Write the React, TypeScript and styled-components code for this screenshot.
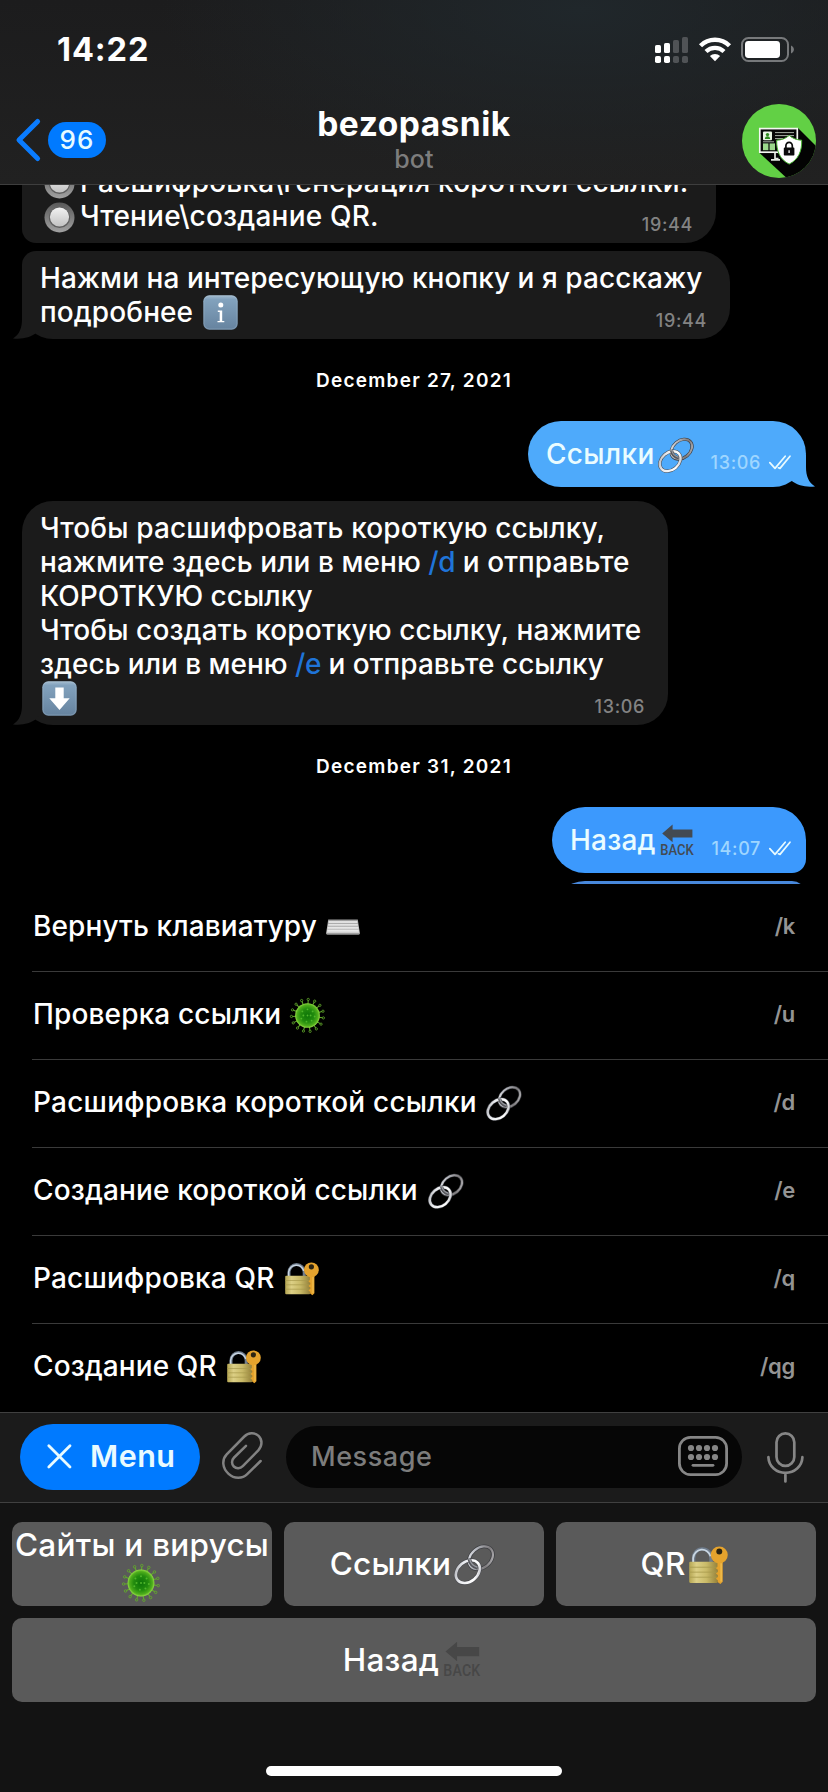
import React from 'react';
import styled, { createGlobalStyle, css } from 'styled-components';

const GlobalStyle = createGlobalStyle`
  body {
    margin: 0;
    background: #000;
    font-family: Inter, "Noto Sans", sans-serif;
    font-weight: 500;
    color: #fff;
  }
`;

/* ---------- layout shells ---------- */

const Screen = styled.div`
  width: 828px;
  height: 1792px;
  display: flex;
  flex-direction: column;
  overflow: hidden;
  background: #000;
`;

const Header = styled.header`
  box-sizing: border-box;
  flex: none;
  height: 185px;
  padding-top: 30px;
  border-bottom: 1px solid #3e3e3e;
  background:
    radial-gradient(ellipse 420px 170px at 580px 10px, #20272b, rgba(30, 32, 33, 0)),
    linear-gradient(#1c1c1d, #212121);
  position: relative;
  z-index: 1;
`;

const StatusBar = styled.div`
  height: 66px;
  display: flex;
  align-items: flex-start;
  justify-content: space-between;
  padding: 0 33px 0 57px;
  box-sizing: border-box;
`;

const Clock = styled.span`
  font-size: 32.5px;
  line-height: 40px;
  font-weight: 720;
  letter-spacing: 0.9px;
`;

const StatusIcons = styled.div`
  display: flex;
  padding-top: 7px;
  gap: 10px;
`;

const NavBar = styled.div`
  height: 88px;
  display: grid;
  grid-template-columns: 200px 1fr 200px;
  align-items: center;
`;

const BackButton = styled.div`
  display: flex;
  align-items: center;
  padding-left: 15px;
  gap: 7px;
`;

const UnreadBadge = styled.span`
  width: 58px;
  height: 36px;
  border-radius: 18px;
  background: #007aff;
  color: #e6fbff;
  font-size: 26px;
  line-height: 36px;
  letter-spacing: 1px;
  text-align: center;
`;

const Heading = styled.div`
  align-self: start;
  padding-top: 10px;
  text-align: center;
`;

const ChatName = styled.div`
  font-size: 33.5px;
  line-height: 36px;
  font-weight: 720;
  letter-spacing: 0.5px;
`;

const ChatKind = styled.div`
  margin-top: 2px;
  font-size: 25px;
  line-height: 30px;
  letter-spacing: 0.2px;
  color: #7d7d7d;
`;

const AvatarSlot = styled.div`
  display: flex;
  justify-content: flex-end;
  padding: 2px 12px 0 0;
`;

const Chat = styled.main`
  flex: none;
  height: 699px;
  overflow: hidden;
`;

const Messages = styled.div`
  display: flex;
  flex-direction: column;
  margin-top: -30px;
`;

const Bubble = styled.div<{ $out?: boolean; $w: number; $h: number; $radius: string; $gap?: number; $bg?: string }>`
  position: relative;
  isolation: isolate;
  box-sizing: border-box;
  flex: none;
  width: ${p => p.$w}px;
  height: ${p => p.$h}px;
  margin-top: ${p => p.$gap ?? 0}px;
  border-radius: ${p => p.$radius};
  background: ${p => p.$bg ?? '#1b1b1b'};
  ${p =>
    p.$out
      ? css`
          align-self: flex-end;
          margin-right: 22px;
          padding: 16px 15px 16px 17px;
          color: #eafcff;
        `
      : css`
          align-self: flex-start;
          margin-left: 22px;
          padding: 10px 23px 10px 18px;
        `}
`;

const Line = styled.div`
  display: flex;
  height: 34px;
  white-space: pre;
`;

const Words = styled.span<{ $track?: number; $link?: boolean; $shift?: number }>`
  font-size: 28px;
  font-weight: 550;
  line-height: 34px;
  letter-spacing: ${p => p.$track ?? 0.1}px;
  margin-left: ${p => p.$shift ?? 0}px;
  color: ${p => (p.$link ? '#1f74d8' : 'inherit')};
`;

const Stamp = styled.span<{ $out?: boolean }>`
  align-self: flex-end;
  margin-left: auto;
  margin-bottom: -3px;
  font-size: 18px;
  line-height: 22px;
  letter-spacing: 0.65px;
  color: ${p => (p.$out ? '#9fd6ff' : '#838383')};
`;

const DayLabel = styled.div`
  flex: none;
  box-sizing: border-box;
  height: 82px;
  padding-top: 1px;
  line-height: 82px;
  text-align: center;
  font-size: 19px;
  font-weight: 630;
  letter-spacing: 1.25px;
`;

const TailBox = styled.svg<{ $out?: boolean }>`
  position: absolute;
  z-index: -1;
  bottom: 0;
  ${p => (p.$out ? 'right: -9px; transform: scaleX(-1);' : 'left: -9px;')}
`;

const IconBox = styled.svg<{ $left?: number; $top?: number }>`
  display: block;
  flex: none;
  overflow: visible;
  margin-left: ${p => p.$left ?? 0}px;
  margin-top: ${p => p.$top ?? 0}px;
`;

const Commands = styled.section`
  flex: none;
  padding-left: 32px;
`;

const Command = styled.div`
  box-sizing: border-box;
  height: 88px;
  display: flex;
  align-items: center;
  padding: 0 33px 3px 1px;
  border-bottom: 1px solid #3a3a3a;
  &:last-child {
    border-bottom-color: transparent;
  }
`;

const Slash = styled.span`
  margin-left: auto;
  font-size: 22px;
  font-weight: 600;
  line-height: 30px;
  letter-spacing: -0.3px;
  color: #949494;
`;

const InputBar = styled.div`
  box-sizing: border-box;
  flex: none;
  height: 91px;
  display: flex;
  align-items: center;
  padding: 0 0 2px 20px;
  border-top: 1px solid #404040;
  border-bottom: 1px solid #404040;
  background: #1b1b1b;
`;

const MenuButton = styled.div`
  box-sizing: border-box;
  width: 180px;
  height: 66px;
  padding: 0 0 2px 27px;
  display: flex;
  align-items: center;
  gap: 18px;
  border-radius: 33px;
  background: #007aff;
  color: #e9fbff;
  font-size: 30.5px;
  font-weight: 630;
  letter-spacing: 0.5px;
`;

const Field = styled.div`
  box-sizing: border-box;
  width: 456px;
  height: 62px;
  margin-left: 24px;
  padding: 0 14px 0 25px;
  display: flex;
  align-items: center;
  justify-content: space-between;
  border-radius: 31px;
  background: #060606;
  color: #7c7c7c;
  font-size: 27px;
  letter-spacing: 0.56px;
`;

const Keyboard = styled.section`
  flex: 1;
  display: flex;
  flex-direction: column;
  padding: 19px 12px 0;
  background: #131313;
`;

const Keys = styled.div`
  display: grid;
  grid-template-columns: repeat(3, 1fr);
  grid-auto-rows: 84px;
  gap: 12px;
`;

const Key = styled.div<{ $wide?: boolean; $stack?: boolean }>`
  grid-column: ${p => (p.$wide ? '1 / -1' : 'auto')};
  display: flex;
  flex-direction: ${p => (p.$stack ? 'column' : 'row')};
  align-items: center;
  justify-content: center;
  padding-right: ${p => (p.$stack ? 0 : 4)}px;
  border-radius: 10px;
  background: #5a5a5a;
  font-size: 31.5px;
  font-weight: 550;
  line-height: 38px;
  letter-spacing: 0.25px;
  white-space: nowrap;
`;

const HomeIndicator = styled.div`
  width: 296px;
  height: 10px;
  margin: auto auto 16px;
  border-radius: 5px;
  background: #fff;
`;

/* ---------- emoji drawings ---------- */

type EmojiProps = { size?: number; left?: number; top?: number };

const DefsBox = styled.svg`
  position: absolute;
`;

const Defs = () => (
  <DefsBox width="0" height="0">
    <defs>
      <linearGradient id="tile" x1="0" y1="0" x2="0" y2="1">
        <stop offset="0" stopColor="#a3bccf" />
        <stop offset="0.12" stopColor="#82a2bd" />
        <stop offset="1" stopColor="#66839f" />
      </linearGradient>
      <linearGradient id="steel" x1="0" y1="0" x2="1" y2="1">
        <stop offset="0" stopColor="#f4f6fa" />
        <stop offset="0.35" stopColor="#a9abb2" />
        <stop offset="0.7" stopColor="#7d7a7c" />
        <stop offset="1" stopColor="#c8c8cc" />
      </linearGradient>
      <linearGradient id="steelBright" x1="0" y1="0" x2="1" y2="1">
        <stop offset="0" stopColor="#a4a6ac" />
        <stop offset="0.3" stopColor="#e8eaee" />
        <stop offset="0.75" stopColor="#ffffff" />
        <stop offset="1" stopColor="#9d9fa8" />
      </linearGradient>
      <radialGradient id="virus">
        <stop offset="0" stopColor="#0c7408" />
        <stop offset="0.55" stopColor="#238c0e" />
        <stop offset="0.85" stopColor="#4fae1c" />
        <stop offset="1" stopColor="#92dc46" />
      </radialGradient>
      <linearGradient id="brass" x1="0" y1="0" x2="1" y2="0">
        <stop offset="0" stopColor="#b5a653" />
        <stop offset="0.25" stopColor="#dccf85" />
        <stop offset="0.6" stopColor="#c9ba68" />
        <stop offset="1" stopColor="#94803a" />
      </linearGradient>
      <linearGradient id="knob" x1="0" y1="0" x2="0" y2="1">
        <stop offset="0" stopColor="#f2f2f2" />
        <stop offset="1" stopColor="#c2c2c2" />
      </linearGradient>
      <linearGradient id="rim" x1="0" y1="0" x2="0" y2="1">
        <stop offset="0" stopColor="#585858" />
        <stop offset="1" stopColor="#a2a2a2" />
      </linearGradient>
      <linearGradient id="keys" x1="0" y1="0" x2="0" y2="1">
        <stop offset="0" stopColor="#9b9b9b" />
        <stop offset="1" stopColor="#d8d8d8" />
      </linearGradient>
    </defs>
  </DefsBox>
);

const RadioEmoji = () => (
  <IconBox width="31" height="31" viewBox="0 0 31 31" $left={4} $top={3}>
    <circle cx="15.5" cy="15.5" r="15" fill="url(#rim)" />
    <circle cx="15.5" cy="15.5" r="10.6" fill="#5f5f5f" />
    <circle cx="15.5" cy="15" r="9.6" fill="url(#knob)" />
  </IconBox>
);

const Tile = ({ left, top, children }: EmojiProps & { children: React.ReactNode }) => (
  <IconBox width="35" height="35" viewBox="0 0 35 35" $left={left} $top={top}>
    <rect x="0.3" y="0.3" width="34.4" height="34.4" rx="6" fill="url(#tile)" />
    <rect x="1" y="1" width="33" height="33" rx="5.4" fill="none" stroke="#b4c8d8" strokeOpacity="0.3" />
    {children}
  </IconBox>
);

const InfoEmoji = (p: EmojiProps) => (
  <Tile {...p}>
    <circle cx="17.8" cy="10" r="2.5" fill="#fff" />
    <path d="M14.8 15.4h4.4v10.5h2.1v1.4h-6.8v-1.4h2.2v-9h-1.9z" fill="#fff" />
  </Tile>
);

const DownEmoji = (p: EmojiProps) => (
  <Tile {...p}>
    <path d="M13.3 6.4h8.4v10.8h6L17.5 28.9 7.3 17.2h6z" fill="#fff" />
  </Tile>
);

const LinkEmoji = ({ size = 34, left, top }: EmojiProps) => (
  <IconBox width={size} height={size} viewBox="0 0 34 34" $left={left} $top={top}>
    <g fill="none">
      <g transform="rotate(-40 22.6 11.2)">
        <ellipse cx="22.6" cy="11.2" rx="11.6" ry="8.6" stroke="#3d3e42" strokeWidth="3.2" />
        <ellipse cx="22.6" cy="11.2" rx="11.6" ry="8.6" stroke="url(#steel)" strokeWidth="1.9" />
      </g>
      <g transform="rotate(-40 11.2 23.2)">
        <ellipse cx="11.2" cy="23.2" rx="11.6" ry="8.6" stroke="#4a4b50" strokeWidth="3.3" />
        <ellipse cx="11.2" cy="23.2" rx="11.6" ry="8.6" stroke="url(#steelBright)" strokeWidth="2.3" />
      </g>
      <path d="M12.6 12.4c.5 3.4 3.2 6.4 7 7.4" stroke="#55565b" strokeWidth="3.2" />
      <path d="M12.8 12.4c.7 3.2 3.2 6 6.8 7" stroke="#96989f" strokeWidth="1.2" />
    </g>
  </IconBox>
);

const spikes = Array.from({ length: 15 }, (_, i) => (i * Math.PI * 2) / 15 + 0.15);
const dots = [
  [17, 17], [12, 13], [17, 11], [22, 13], [24, 18], [21, 22], [16, 23], [11, 20], [13, 17], [20, 17],
];

const VirusEmoji = ({ size = 35, left, top }: EmojiProps) => (
  <IconBox width={size} height={size} viewBox="0 0 34 34" $left={left} $top={top}>
    {spikes.map(a => {
      const c = Math.cos(a);
      const s = Math.sin(a);
      return (
        <g key={a} stroke="#62aa2c" fill="none">
          <path d={`M${17 + 11 * c} ${17 + 11 * s}L${17 + 14.6 * c} ${17 + 14.6 * s}`} strokeWidth="1" />
          <circle cx={17 + 15.6 * c} cy={17 + 15.6 * s} r="1.1" strokeWidth="0.8" />
        </g>
      );
    })}
    <circle cx="17" cy="17" r="12" fill="url(#virus)" />
    {dots.map(([x, y]) => (
      <circle key={`${x}-${y}`} cx={x} cy={y} r="0.9" fill="#4fb62a" />
    ))}
  </IconBox>
);

const LockKeyEmoji = ({ size = 34, left, top }: EmojiProps) => (
  <IconBox width={size} height={size} viewBox="0 0 34 34" $left={left} $top={top}>
    <path d="M4 15V10.5a7.6 8 0 0 1 15.2 0V15" fill="none" stroke="#6f7c8c" strokeWidth="3" />
    <path d="M3.6 15V10.5a7.8 8.2 0 0 1 15.2-1.6" fill="none" stroke="#c9d6e2" strokeWidth="1.5" />
    <rect x="0.2" y="13.8" width="25" height="18.4" rx="1" fill="url(#brass)" />
    <path d="M0.4 18.5h24.4M0.4 22.8h24.4M0.4 27.2h24.4" stroke="#a89a4c" strokeWidth="0.7" />
    <circle cx="26.4" cy="7.8" r="7.4" fill="#e5a32d" />
    <path
      d="M29.4 13V31.2l-2 2-2.3-1.6v-1.8l-1.7-1.3 1.7-1.4v-1.8l-1.7-1.3 1.7-1.4v-1.8l-1.7-1.3 1.4-1.4V13z"
      fill="#e5a32d"
    />
    <path d="M28 15v16" stroke="#f4c65a" strokeWidth="0.9" />
    <circle cx="26.4" cy="4.8" r="2.6" fill="#2b2413" />
  </IconBox>
);

const KeyboardEmoji = ({ left, top }: EmojiProps) => (
  <IconBox width="34" height="16" viewBox="0 0 34 16" $left={left} $top={top}>
    <path d="M2.2 0.4h29.6l2 13.6a1.4 1.4 0 0 1-1.4 1.5H1.6A1.4 1.4 0 0 1 .2 14z" fill="url(#keys)" />
    <path d="M2.6 3h28.8M2.2 5.8h29.6M1.8 8.8h30.4M1.4 11.8h31.2" stroke="#f3f3f3" strokeWidth="1.3" />
    <path d="M0.8 14.8h32.4" stroke="#8b8b8b" strokeWidth="1" />
  </IconBox>
);

const BackEmoji = ({ size = 34, left, top, tint = '#434a52' }: EmojiProps & { tint?: string }) => (
  <IconBox width={size} height={size} viewBox="0 0 34 34" $left={left} $top={top}>
    <path d="M2.2 9.4 12.6.6v4.8h19.8v8.2H12.6v4.6z" fill={tint} />
    <text
      x="0.2"
      y="31.4"
      textLength="33.4"
      lengthAdjust="spacingAndGlyphs"
      fontFamily="Roboto, sans-serif"
      fontWeight="500"
      fontSize="14.6"
      fill={tint}
    >
      BACK
    </text>
  </IconBox>
);

/* ---------- interface icons ---------- */

const Tail = ({ out, fill }: { out?: boolean; fill: string }) => (
  <TailBox $out={out} width="32" height="34" viewBox="0 0 32 34">
    <path d="M9 2v12C9 23 6.5 29.5 0 33.4 9 34.6 17.5 32.3 22.5 28.6L30 20V2z" fill={fill} />
  </TailBox>
);

const Checks = () => (
  <IconBox width="22" height="15" viewBox="0 0 22 15" $left={8} $top={18}>
    <path
      d="M.8 7.6 6 13.4 16.2 1.2M9.4 12.8 11 13.4 21 1.2"
      fill="none"
      stroke="#e9fbff"
      strokeWidth="1.7"
      strokeLinecap="round"
      strokeLinejoin="round"
    />
  </IconBox>
);

const Signal = () => (
  <IconBox width="34" height="26" viewBox="0 0 34 26">
    <rect x="0" y="8" width="6" height="8" rx="1.6" fill="#fff" />
    <rect x="9" y="6" width="6" height="10" rx="1.6" fill="#fff" />
    <rect x="18" y="3" width="6" height="13" rx="1.6" fill="#505356" />
    <rect x="27" y="0" width="6" height="16" rx="1.6" fill="#505356" />
    <rect x="0" y="19" width="6" height="7" rx="1.8" fill="#fff" />
    <rect x="9" y="19" width="6" height="7" rx="1.8" fill="#fff" />
    <rect x="18" y="19" width="6" height="7" rx="1.8" fill="#505356" />
    <rect x="27" y="19" width="6" height="7" rx="1.8" fill="#505356" />
  </IconBox>
);

const Wifi = () => (
  <IconBox width="32" height="25" viewBox="0 0 32 25">
    <g fill="none" stroke="#fff">
      <path d="M1.5 8.7a20.6 20.6 0 0 1 29 0" strokeWidth="4.4" />
      <path d="M7 14.6a12.8 12.8 0 0 1 18 0" strokeWidth="4.2" />
    </g>
    <path d="M16 24.3 10.9 19.1a7.2 7.2 0 0 1 10.2 0z" fill="#fff" />
  </IconBox>
);

const Battery = () => (
  <IconBox width="54" height="26" viewBox="0 0 54 26">
    <rect x="1" y="1" width="46" height="23" rx="6.5" fill="none" stroke="#77797b" strokeWidth="2" />
    <rect x="4" y="4" width="35" height="17" rx="3.4" fill="#fff" />
    <path d="M50 8.6c1.9.8 2.9 2.3 2.9 4s-1 3.2-2.9 4z" fill="#77797b" />
  </IconBox>
);

const Chevron = () => (
  <IconBox width="26" height="44" viewBox="0 0 26 44">
    <path d="M22.6 3.5 4 22l18.6 18.5" fill="none" stroke="#0a7cff" strokeWidth="5" strokeLinecap="round" strokeLinejoin="round" />
  </IconBox>
);

const Avatar = () => (
  <IconBox width="74" height="74" viewBox="0 0 74 74">
    <clipPath id="disc">
      <circle cx="37" cy="37" r="37" />
    </clipPath>
    <g clipPath="url(#disc)">
      <rect width="74" height="74" fill="#62d045" />
      <path d="M56 24 82 50 62 90 17 48.5z" fill="#030303" />
      <rect x="17.8" y="24.6" width="37.5" height="23.6" fill="#080808" stroke="#f4f7f2" strokeWidth="1.7" />
      <rect x="21" y="27.6" width="9" height="8.6" rx="1" fill="#e9f6e4" />
      <circle cx="25.5" cy="30.6" r="1.7" fill="#2f8b20" />
      <path d="M22.8 35c.3-2 1.3-2.7 2.7-2.7s2.4.7 2.7 2.7z" fill="#2f8b20" />
      <rect x="21" y="39.4" width="5.4" height="6.8" fill="#9bd88b" />
      <rect x="27.6" y="39.4" width="5.4" height="6.8" fill="#9bd88b" />
      <path d="M33 28.6h19M33 31.6h19M33 34.6h8M21 37.8h11" stroke="#b9c2b7" strokeWidth="0.9" />
      <path d="M33 49v5.5h3.5M29 55.8h9" stroke="#e4e9e2" strokeWidth="1.7" fill="none" />
      <path
        d="M47.2 31.4c3.4 3 7.6 4.6 12.5 4.8.3 10.8-3.2 19.3-12.5 23.9-9.3-4.6-12.8-13.1-12.5-23.9 4.9-.2 9.1-1.8 12.5-4.8z"
        fill="#fff"
        stroke="#49b433"
        strokeWidth="1"
      />
      <rect x="41.8" y="43.6" width="10.6" height="8" rx="0.8" fill="#0b0b0b" />
      <path d="M43.9 44v-2.2a3.2 3.5 0 0 1 6.4 0V44" fill="none" stroke="#0b0b0b" strokeWidth="1.7" />
      <path d="M47.1 46.3v2.8" stroke="#fff" strokeWidth="1.3" />
    </g>
  </IconBox>
);

const Cross = () => (
  <IconBox width="25" height="25" viewBox="0 0 25 25" $top={2}>
    <path d="M1.8 1.8 23 23M23 1.8 1.8 23" stroke="#e9fbff" strokeWidth="2.8" strokeLinecap="round" />
  </IconBox>
);

const Paperclip = () => (
  <IconBox width="40" height="47" viewBox="0 0 40 47" $left={22} $top={-2}>
    <path
      d="M38.6 29 25.2 42.2C20.5 46.9 12.2 47.2 6.6 41.9 0 35.7-.2 27.6 4.7 22.4L22.3 4.5C26.4.4 32.6.1 36.6 3.9c4 3.9 3.7 10.4-.3 14.5L20.8 34.2c-2.6 2.6-6.5 2.7-9 .3-2.5-2.5-2.3-6.4.3-9L24 13.8"
      fill="none"
      stroke="#828282"
      strokeWidth="2.5"
      strokeLinecap="round"
      strokeLinejoin="round"
    />
  </IconBox>
);

const KeyboardIcon = () => (
  <IconBox width="50" height="40" viewBox="0 0 50 40" $top={-2}>
    <rect x="1.4" y="1.4" width="47.2" height="37.2" rx="11" fill="none" stroke="#868686" strokeWidth="2.8" />
    {[12, 21].map(y =>
      [13, 21, 29, 37].map(x => <circle key={`${x}-${y}`} cx={x} cy={y} r="3.1" fill="#868686" />)
    )}
    <path d="M15 29.3h20" stroke="#868686" strokeWidth="2.8" strokeLinecap="round" />
  </IconBox>
);

const Mic = () => (
  <IconBox width="37" height="51" viewBox="0 0 37 51" $left={25} $top={1}>
    <g fill="none" stroke="#868686" strokeWidth="2.7" strokeLinecap="round">
      <rect x="9.5" y="1.4" width="17.8" height="32.5" rx="8.9" />
      <path d="M1.4 25.2c.4 9.3 8 15.600 17 15.600s16.600-6.300 17-15.600M18.400 41v8.400" />
    </g>
  </IconBox>
);

/* ---------- screen ---------- */

const commands: { label: string; track: number; slash: string; emoji: React.ReactNode }[] = [
  { label: 'Вернуть клавиатуру', track: 0.1, slash: '/k', emoji: <KeyboardEmoji left={9} top={1} /> },
  { label: 'Проверка ссылки', track: 0.15, slash: '/u', emoji: <VirusEmoji left={9} top={2} /> },
  { label: 'Расшифровка короткой ссылки', track: 0.22, slash: '/d', emoji: <LinkEmoji left={10} top={2} /> },
  { label: 'Создание короткой ссылки', track: 0.14, slash: '/e', emoji: <LinkEmoji left={11} top={2} /> },
  { label: 'Расшифровка QR', track: 0.18, slash: '/q', emoji: <LockKeyEmoji left={10} top={2} /> },
  { label: 'Создание QR', track: 0.1, slash: '/qg', emoji: <LockKeyEmoji left={10} top={2} /> },
];

export default function App() {
  return (
    <Screen>
      <GlobalStyle />
      <Defs />
      <Header>
        <StatusBar>
          <Clock>14:22</Clock>
          <StatusIcons>
            <Signal />
            <Wifi />
            <Battery />
          </StatusIcons>
        </StatusBar>
        <NavBar>
          <BackButton>
            <Chevron />
            <UnreadBadge>96</UnreadBadge>
          </BackButton>
          <Heading>
            <ChatName>bezopasnik</ChatName>
            <ChatKind>bot</ChatKind>
          </Heading>
          <AvatarSlot>
            <Avatar />
          </AvatarSlot>
        </NavBar>
      </Header>

      <Chat>
        <Messages>
          <Bubble $w={694} $h={88} $radius="0 0 31px 14px">
            <Line>
              <RadioEmoji />
              <Words $track={0.22} $shift={5}>Расшифровка\генерация короткой ссылки.</Words>
            </Line>
            <Line>
              <RadioEmoji />
              <Words $track={0.2} $shift={5}>Чтение\создание QR.</Words>
              <Stamp>19:44</Stamp>
            </Line>
          </Bubble>

          <Bubble $w={708} $h={88} $gap={8} $radius="14px 31px 31px 31px">
            <Tail fill="#1b1b1b" />
            <Line>
              <Words $track={0.06}>Нажми на интересующую кнопку и я расскажу</Words>
            </Line>
            <Line>
              <Words $track={0.1}>подробнее</Words>
              <InfoEmoji left={10} />
              <Stamp>19:44</Stamp>
            </Line>
          </Bubble>

          <DayLabel>December 27, 2021</DayLabel>

          <Bubble $out $w={278} $h={66} $radius="33px" $bg="#4eaafb">
            <Tail out fill="#4eaafb" />
            <Line>
              <Words $track={0.3} $shift={1}>Ссылки</Words>
              <LinkEmoji left={4} top={1} />
              <Stamp $out>13:06</Stamp>
              <Checks />
            </Line>
          </Bubble>

          <Bubble $w={646} $h={224} $gap={14} $radius="31px">
            <Tail fill="#1b1b1b" />
            <Line>
              <Words $track={0.13}>Чтобы расшифровать короткую ссылку,</Words>
            </Line>
            <Line>
              <Words $track={0.05}>нажмите здесь или в меню </Words>
              <Words $track={-0.4} $link>/d</Words>
              <Words $track={0.08}> и отправьте</Words>
            </Line>
            <Line>
              <Words $track={0.05}>КОРОТКУЮ ссылку</Words>
            </Line>
            <Line>
              <Words $track={0.12}>Чтобы создать короткую ссылку, нажмите</Words>
            </Line>
            <Line>
              <Words $track={-0.03}>здесь или в меню </Words>
              <Words $track={-0.4} $link>/e</Words>
              <Words $track={0.02}> и отправьте ссылку</Words>
            </Line>
            <Line>
              <DownEmoji left={2} />
              <Stamp>13:06</Stamp>
            </Line>
          </Bubble>

          <DayLabel>December 31, 2021</DayLabel>

          <Bubble $out $w={254} $h={66} $radius="33px 33px 14px 33px" $bg="#3c99fd">
            <Line>
              <Words $track={0.2} $shift={1}>Назад</Words>
              <BackEmoji left={4} top={1} />
              <Stamp $out>14:07</Stamp>
              <Checks />
            </Line>
          </Bubble>

          <Bubble $out $w={254} $h={66} $gap={8} $radius="33px 14px 33px 33px" $bg="#4888dc" />
        </Messages>
      </Chat>

      <Commands>
        {commands.map(c => (
          <Command key={c.slash}>
            <Words $track={c.track}>{c.label}</Words>
            {c.emoji}
            <Slash>{c.slash}</Slash>
          </Command>
        ))}
      </Commands>

      <InputBar>
        <MenuButton>
          <Cross />
          Menu
        </MenuButton>
        <Paperclip />
        <Field>
          Message
          <KeyboardIcon />
        </Field>
        <Mic />
      </InputBar>

      <Keyboard>
        <Keys>
          <Key $stack>
            <span>Сайты и вирусы</span>
            <VirusEmoji size={38} left={-3} />
          </Key>
          <Key>
            Ссылки
            <LinkEmoji size={39} left={4} />
          </Key>
          <Key>
            QR
            <LockKeyEmoji size={39} left={3} top={3} />
          </Key>
          <Key $wide>
            Назад
            <BackEmoji size={38} left={4} tint="#474747" />
          </Key>
        </Keys>
        <HomeIndicator />
      </Keyboard>
    </Screen>
  );
}
